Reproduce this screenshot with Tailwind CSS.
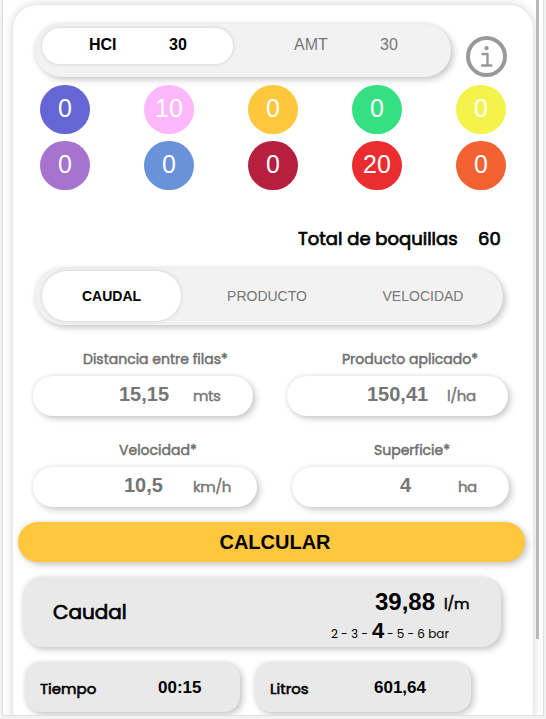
<!DOCTYPE html>
<html lang="es">
<head>
  <meta charset="UTF-8" />
  <meta name="viewport" content="width=device-width, initial-scale=1.0"/>
  <title>Calculadora de boquillas</title>
  <script src="https://cdn.jsdelivr.net/npm/@tailwindcss/browser@4"></script>
</head>
<body class="h-[719px] overflow-hidden bg-[#f1f3f3] pl-[2px] font-['Poppins','Inter',sans-serif] text-black">
  <div class="flex h-[716px] w-[542px] overflow-hidden border-x border-b border-[#dde0e0] bg-white pl-[10px]">
    <div class="mt-[5px] h-[730px] w-[520px] shrink-0 rounded-[24px] bg-white pt-[19px] shadow-[0_0_10px_rgba(0,0,0,0.2)]">

      <!-- Tipo de boquilla -->
      <div class="flex h-[53px]">
        <div class="ml-[22px] flex h-[53px] w-[416px] rounded-full bg-[#f2f2f2] pt-1 pl-[7px] font-['Liberation_Sans',sans-serif] text-base leading-[33px] shadow-[3px_3px_6px_rgba(0,0,0,0.2),-1px_-1px_4px_rgba(0,0,0,0.08)]">
          <button class="flex h-9 w-[191px] rounded-full bg-white pl-[47px] font-bold shadow-[0_0_4px_rgba(0,0,0,0.15)]">
            <span class="w-[80px] text-left">HCI</span>
            <span>30</span>
          </button>
          <button class="flex h-9 pl-[61px] text-[#777]">
            <span class="w-[86px] text-left">AMT</span>
            <span>30</span>
          </button>
        </div>
        <svg class="mt-3 ml-[15px] size-[41px]" viewBox="0 0 41 41" fill="none" stroke="#999" stroke-linecap="round" stroke-linejoin="round">
          <circle cx="20.5" cy="20.5" r="18.5" stroke-width="4" />
          <path d="M16.5 18H21.5V29.5M16 29.5H25.3" stroke-width="2.4" />
          <circle cx="20.5" cy="12.2" r="2.1" fill="#999" stroke="none" />
        </svg>
      </div>

      <!-- Boquillas por color -->
      <div class="mt-2 ml-[27px] grid w-[466px] grid-cols-[repeat(5,50px)] justify-between gap-y-[7px] text-center font-['Liberation_Sans',sans-serif] text-[25px] leading-[47px] text-white">
        <div class="h-[49px] rounded-full bg-[#6565d6]">0</div>
        <div class="h-[49px] rounded-full bg-[#fdb8fb]">10</div>
        <div class="h-[49px] rounded-full bg-[#ffc73d]">0</div>
        <div class="h-[49px] rounded-full bg-[#34e081]">0</div>
        <div class="h-[49px] rounded-full bg-[#f3f34b]">0</div>
        <div class="h-[49px] rounded-full bg-[#a673ce]">0</div>
        <div class="h-[49px] rounded-full bg-[#6992db]">0</div>
        <div class="h-[49px] rounded-full bg-[#b6203e]">0</div>
        <div class="h-[49px] rounded-full bg-[#ec2d2f]">20</div>
        <div class="h-[49px] rounded-full bg-[#f36132]">0</div>
      </div>

      <div class="mt-[37px] flex h-6 pl-[285px] text-[18px] leading-6 font-normal whitespace-nowrap [-webkit-text-stroke:0.7px]">
        <span class="w-[180px]">Total de boquillas</span>
        <span>60</span>
      </div>

      <!-- Modo de calculo -->
      <div class="mt-[17px] ml-[22px] flex h-[57px] w-[468px] rounded-full bg-[#f2f2f2] pt-[3px] pl-[7px] font-['Liberation_Sans',sans-serif] text-sm leading-[50px] shadow-[3px_3px_6px_rgba(0,0,0,0.2),-1px_-1px_4px_rgba(0,0,0,0.08)]">
        <button class="h-[50px] w-[139px] rounded-full bg-white font-bold shadow-[0_0_4px_rgba(0,0,0,0.15)]">CAUDAL</button>
        <button class="h-[50px] w-[172px] text-[#777]">PRODUCTO</button>
        <button class="h-[50px] w-[140px] text-[#777]">VELOCIDAD</button>
      </div>

      <!-- Datos de trabajo -->
      <div class="mt-6 flex h-[27px] text-sm leading-5 font-normal whitespace-nowrap text-[#6f6f6f] [-webkit-text-stroke:0.5px]">
        <span class="ml-[70px] w-[259px]">Distancia entre filas*</span>
        <span>Producto aplicado*</span>
      </div>
      <div class="flex h-10 leading-10 whitespace-nowrap text-[#757575]">
        <div class="ml-5 flex w-[220px] rounded-full bg-white shadow-[3px_3px_6px_rgba(0,0,0,0.2),-1px_-1px_4px_rgba(0,0,0,0.08)]">
          <span class="w-[160px] pl-[86px] font-['Liberation_Sans',sans-serif] text-xl leading-[37px] font-bold">15,15</span>
          <span class="text-[15px] tracking-[-0.5px] [-webkit-text-stroke:0.4px]">mts</span>
        </div>
        <div class="ml-[34px] flex w-[221px] rounded-full bg-white shadow-[3px_3px_6px_rgba(0,0,0,0.2),-1px_-1px_4px_rgba(0,0,0,0.08)]">
          <span class="w-[160px] pl-[80px] font-['Liberation_Sans',sans-serif] text-xl leading-[37px] font-bold">150,41</span>
          <span class="text-[15px] tracking-[-0.5px] [-webkit-text-stroke:0.4px]">l/ha</span>
        </div>
      </div>
      <div class="mt-6 flex h-[27px] text-sm leading-5 font-normal whitespace-nowrap text-[#6f6f6f] [-webkit-text-stroke:0.5px]">
        <span class="ml-[106px] w-[255px]">Velocidad*</span>
        <span>Superficie*</span>
      </div>
      <div class="flex h-10 leading-10 whitespace-nowrap text-[#757575]">
        <div class="ml-5 flex w-[224px] rounded-full bg-white shadow-[3px_3px_6px_rgba(0,0,0,0.2),-1px_-1px_4px_rgba(0,0,0,0.08)]">
          <span class="w-[160px] pl-[91px] font-['Liberation_Sans',sans-serif] text-xl leading-[37px] font-bold">10,5</span>
          <span class="text-[15px] tracking-[-0.5px] [-webkit-text-stroke:0.4px]">km/h</span>
        </div>
        <div class="ml-[35px] flex w-[217px] rounded-full bg-white shadow-[3px_3px_6px_rgba(0,0,0,0.2),-1px_-1px_4px_rgba(0,0,0,0.08)]">
          <span class="w-[166px] pl-[108px] font-['Liberation_Sans',sans-serif] text-xl leading-[37px] font-bold">4</span>
          <span class="text-[15px] tracking-[-0.5px] [-webkit-text-stroke:0.4px]">ha</span>
        </div>
      </div>

      <button class="mt-[15px] ml-[5px] block h-10 w-[507px] rounded-full bg-[#ffc73d] pl-[7px] text-center font-['Liberation_Sans',sans-serif] text-xl font-bold shadow-[3px_3px_6px_rgba(0,0,0,0.2),-1px_-1px_4px_rgba(0,0,0,0.08)]">CALCULAR</button>

      <!-- Resultados -->
      <div class="mt-[15px] ml-[10px] flex h-[70px] w-[478px] rounded-[20px] bg-[#e9e9e9] pl-[30px] whitespace-nowrap shadow-[3px_3px_6px_rgba(0,0,0,0.2),-1px_-1px_4px_rgba(0,0,0,0.08)]">
        <span class="w-[278px] text-xl leading-[70px] [-webkit-text-stroke:0.7px]">Caudal</span>
        <div class="pt-[10px]">
          <div class="flex h-[30px] pl-[44px] leading-[30px]">
            <span class="w-[69px] font-['Liberation_Sans',sans-serif] text-2xl leading-[30px] font-bold">39,88</span>
            <span class="text-[15px] leading-[33px] tracking-[-0.4px] [-webkit-text-stroke:0.5px]">l/m</span>
          </div>
          <div class="flex h-6 items-baseline pt-0.5 text-xs leading-6">
            <span class="w-[41px]">2 - 3 -</span>
            <span class="w-[15px] font-['Liberation_Sans',sans-serif] text-[22px] leading-6 font-bold">4</span>
            <span>- 5 - 6 bar</span>
          </div>
        </div>
      </div>
      <div class="mt-[15px] flex h-[50px] leading-[51px] whitespace-nowrap">
        <div class="ml-3 flex w-[215px] rounded-2xl bg-[#e9e9e9] pl-[15px] shadow-[3px_3px_6px_rgba(0,0,0,0.2),-1px_-1px_4px_rgba(0,0,0,0.08)]">
          <span class="w-[118px] text-[15px] leading-[54px] [-webkit-text-stroke:0.6px]">Tiempo</span>
          <span class="font-['Liberation_Sans',sans-serif] text-[17px] font-bold">00:15</span>
        </div>
        <div class="ml-[15px] flex w-[216px] rounded-2xl bg-[#e9e9e9] pl-[15px] shadow-[3px_3px_6px_rgba(0,0,0,0.2),-1px_-1px_4px_rgba(0,0,0,0.08)]">
          <span class="w-[104px] text-[15px] leading-[54px] [-webkit-text-stroke:0.6px]">Litros</span>
          <span class="font-['Liberation_Sans',sans-serif] text-[17px] font-bold">601,64</span>
        </div>
      </div>
    </div>

    <!-- Barra de desplazamiento -->
    <div class="z-10 ml-[3px] h-[639px] w-[3px] shrink-0 bg-[#b8b8b8]"></div>
  </div>
</body>
</html>
